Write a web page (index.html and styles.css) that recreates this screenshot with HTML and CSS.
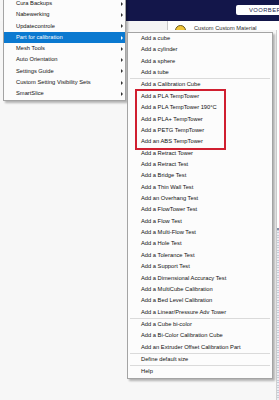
FILE: index.html
```html
<!DOCTYPE html>
<html lang="nl">
<head>
    <meta charset="UTF-8">
    <meta name="viewport" content="width=device-width, initial-scale=1.0">
    <title>Part for calibration</title>
    <link rel="stylesheet" href="styles.css">
</head>
<body>

    <div class="app">
        <header class="topbar">
            <button class="stage-btn">VOORBEREIDEN</button>
        </header>

        <div class="toolbar">
            <div class="toolbar-left"></div>
            <div class="material">
                <span class="material-icon"></span>
                <span>Custom Custom Material</span>
            </div>
        </div>

        <div class="workspace">
            <div class="viewport"></div>
            <div class="side-panel">
                <div class="object-list"></div>
            </div>
        </div>
    </div>

    <!-- Extensions menu -->
    <div class="menu menu-main">
        <div class="menu-item has-sub">Cura Backups</div>
        <div class="menu-item has-sub">Nabewerking</div>
        <div class="menu-item has-sub">Updatecontrole</div>
        <div class="menu-item has-sub active">Part for calibration</div>
        <div class="menu-item has-sub">Mesh Tools</div>
        <div class="menu-item has-sub">Auto Orientation</div>
        <div class="menu-item has-sub">Settings Guide</div>
        <div class="menu-item has-sub">Custom Setting Visibility Sets</div>
        <div class="menu-item has-sub">SmartSlice</div>
    </div>

    <!-- Part for calibration submenu -->
    <div class="menu menu-sub">
        <div class="menu-item">Add a cube</div>
        <div class="menu-item">Add a cylinder</div>
        <div class="menu-item">Add a sphere</div>
        <div class="menu-item">Add a tube</div>
        <div class="separator"></div>
        <div class="menu-item">Add a Calibration Cube</div>
        <div class="callout">
            <div class="menu-item">Add a PLA TempTower</div>
            <div class="menu-item">Add a PLA TempTower 190°C</div>
            <div class="menu-item">Add a PLA+ TempTower</div>
            <div class="menu-item">Add a PETG TempTower</div>
            <div class="menu-item">Add an ABS TempTower</div>
        </div>
        <div class="menu-item">Add a Retract Tower</div>
        <div class="menu-item">Add a Retract Test</div>
        <div class="menu-item">Add a Bridge Test</div>
        <div class="menu-item">Add a Thin Wall Test</div>
        <div class="menu-item">Add an Overhang Test</div>
        <div class="menu-item">Add a FlowTower Test</div>
        <div class="menu-item">Add a Flow Test</div>
        <div class="menu-item">Add a Multi-Flow Test</div>
        <div class="menu-item">Add a Hole Test</div>
        <div class="menu-item">Add a Tolerance Test</div>
        <div class="menu-item">Add a Support Test</div>
        <div class="menu-item">Add a Dimensional Accuracy Test</div>
        <div class="menu-item">Add a MultiCube Calibration</div>
        <div class="menu-item">Add a Bed Level Calibration</div>
        <div class="menu-item">Add a Linear/Pressure Adv Tower</div>
        <div class="separator"></div>
        <div class="menu-item">Add a Cube bi-color</div>
        <div class="menu-item">Add a Bi-Color Calibration Cube</div>
        <div class="menu-item">Add an Extruder Offset Calibration Part</div>
        <div class="separator"></div>
        <div class="menu-item">Define default size</div>
        <div class="separator"></div>
        <div class="menu-item">Help</div>
    </div>

</body>
</html>
```

FILE: styles.css
```css
/* General Styles */
body {
    margin: 0;
    width: 279px;
    height: 400px;
    overflow: hidden;
    position: relative;
    background-color: #f6f6f6;
    font-family: 'Liberation Sans', Arial, sans-serif;
    color: #111;
}

/* Cura window behind the menus */
.app {
    display: flex;
    flex-direction: column;
    height: 400px;
}

.topbar {
    height: 22px;
    margin-left: 3px;
    background: #13164a;
    display: flex;
    justify-content: flex-end;
    align-items: flex-start;
    padding-top: 5px;
    box-sizing: border-box;
}

.stage-btn {
    width: 60px;
    height: 10px;
    margin-right: -17px;
    padding: 0 0 0 13px;
    border: none;
    border-radius: 2px;
    background: #fff;
    color: #1b1f54;
    font-family: 'Liberation Sans', Arial, sans-serif;
    font-size: 5.8px;
    letter-spacing: 0.45px;
    text-align: left;
}

.toolbar {
    height: 10px;
    display: flex;
    overflow: hidden;
}

.toolbar-left {
    width: 167px;
    background: #f4f4f4;
    border-right: 1px solid #c8c8c8;
}

.material {
    flex: 1;
    background: #fff;
    display: flex;
    align-items: flex-start;
    gap: 8px;
    padding: 4px 0 0 7px;
    font-size: 5.7px;
    line-height: 6px;
    color: #2a2a2a;
    white-space: nowrap;
}

.material-icon {
    width: 9px;
    height: 9px;
    border-radius: 50%;
    background: #f0c53a;
    border: 1px solid #6b5a20;
    flex-shrink: 0;
}

.workspace {
    flex: 1;
    display: flex;
}

.viewport {
    width: 276px;
    background: #f7f7f7;
}

.side-panel {
    flex: 1;
    background: #fff;
    border-left: 1px solid #cfcfcf;
    padding-top: 198px;
}

.object-list {
    height: 170px;
    border-top: 2px solid #8790a6;
    background: repeating-linear-gradient(#c6ccd8 0 1px, #eceef3 1px 2.5px);
}

/* Menus */
.menu {
    position: absolute;
    background: #fcfcfc;
    border: 1px solid #a4a4a4;
    box-shadow: 2px 2px 2px rgba(0, 0, 0, 0.28);
    font-size: 5.75px;
    color: #111;
    white-space: nowrap;
}

.menu-item {
    position: relative;
}

.menu-main {
    left: 3px;
    top: -3px;
    width: 121px;
}

.menu-main .menu-item {
    height: 11.3px;
    line-height: 11.3px;
    padding-left: 12px;
}

.menu-main .has-sub::after {
    content: "";
    position: absolute;
    right: 2px;
    top: 50%;
    margin-top: -2px;
    border-left: 2.5px solid #333;
    border-top: 2px solid transparent;
    border-bottom: 2px solid transparent;
}

.menu-main .active {
    background: #0b79d0;
    color: #fff;
}

.menu-main .active::after {
    border-left-color: #fff;
}

.menu-sub {
    left: 127px;
    top: 32px;
    width: 144px;
}

.menu-sub .menu-item {
    height: 11.37px;
    line-height: 11.37px;
    padding-left: 13px;
}

.separator {
    height: 1px;
    margin: 0 2px;
    background: #dadada;
}

/* Red annotation box around the TempTower entries */
.callout {
    width: 87px;
    margin-left: 9px;
    outline: 2px solid #d01f30;
}

.menu-sub .callout .menu-item {
    padding-left: 4px;
}
```
